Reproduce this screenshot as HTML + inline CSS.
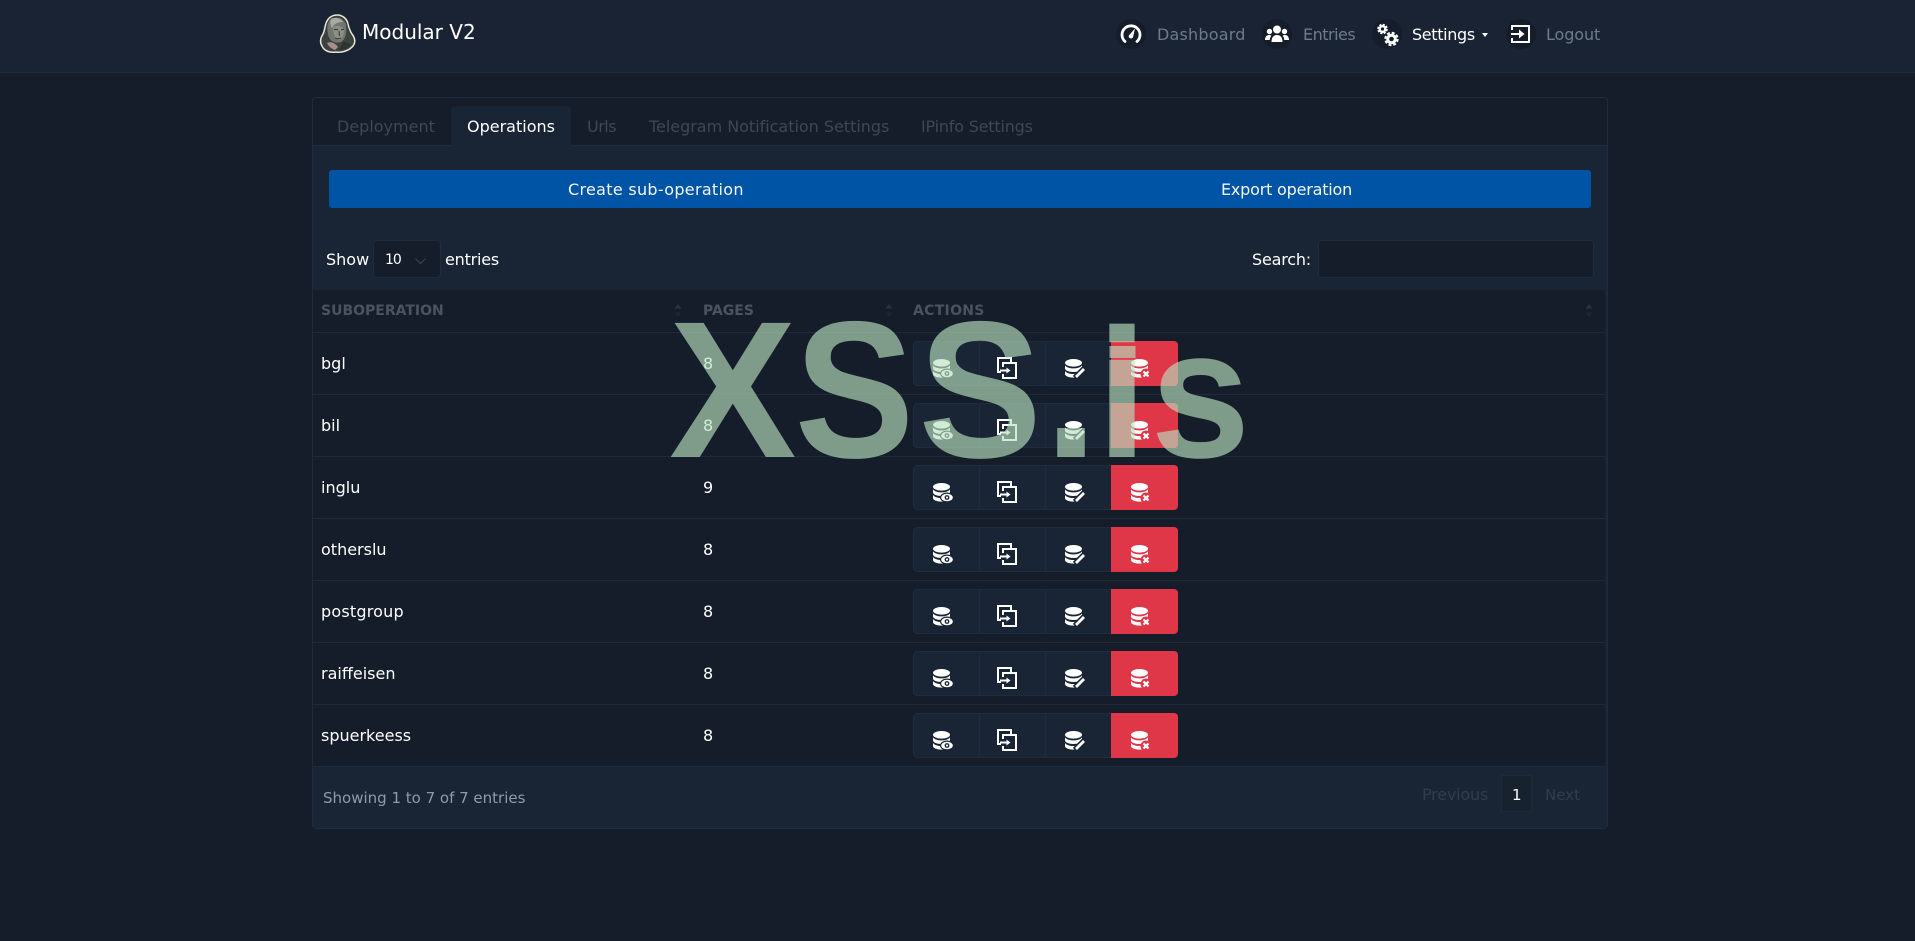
<!DOCTYPE html>
<html lang="en"><head><meta charset="utf-8"><title>Modular V2</title>
<style>
html,body{margin:0;padding:0;width:1915px;height:941px;overflow:hidden;background:#141d29}
*{box-sizing:border-box}
body{position:relative;font-family:"DejaVu Sans","Liberation Sans",sans-serif;font-size:16px;color:#fff}
.a{position:absolute}
.t{position:absolute;white-space:nowrap;line-height:20px;height:20px}
.nav{left:0;top:0;width:1915px;height:73px;background:#192333;border-bottom:1px solid #1d2b3e}
.card{left:312px;top:97px;width:1296px;height:732px;background:#192434;border:1px solid #1e2c3f;border-radius:4px}
.tabs{left:313px;top:98px;width:1294px;height:48px;background:#141d29;border-bottom:1px solid #1e2c3f;border-radius:4px 4px 0 0}
.tab{left:451px;top:106px;width:120px;height:40px;background:#192434;border-radius:4px 4px 0 0}
.m{color:#3e4753}
.blue{left:329px;top:170px;width:1262px;height:38px;background:#0054a6;border-radius:3px}
.inp{background:#141d29;border:1px solid #1e2c3f;border-radius:4px}
.table{left:313px;top:290px;width:1292px;height:476px;background:#141d29}
.line{left:313px;width:1292px;height:1px;background:#1c2a3c}
.h{font-weight:700;font-size:14px;color:#4a535e}
.grp{left:913px;width:265px;height:45px;background:#192434;border:1px solid #1e2c3f;border-radius:4px}
.sep{top:0;width:1px;height:43px;background:#1e2c3f}
.red{left:197px;top:-1px;width:67px;height:45px;background:#df3648;border-radius:0 4px 4px 0}
svg{position:absolute;display:block;overflow:visible}
.c{position:absolute;top:19px;width:30px;height:30px;border-radius:50%;background:#141d29}
.n{color:#6f7b88}
</style></head><body>
<svg width="0" height="0" style="position:absolute">
<defs>
<symbol id="db" viewBox="0 0 20 20" overflow="visible"><ellipse cx="8.500" cy="3.800" rx="8.500" ry="3.800" fill="#fff"/><path fill="#fff" d="M0 6.400c1.500 2 4.900 3 8.500 3s7-1 8.500-3v3c0 2.100-3.800 3.600-8.500 3.600S0 11.500 0 9.400z"/><path fill="#fff" d="M0 12c1.500 2 4.900 3 8.500 3s7-1 8.500-3v3c0 2.100-3.800 3.600-8.500 3.600S0 17.100 0 15z"/></symbol>
<symbol id="v" viewBox="0 0 20 20" overflow="visible"><use href="#db" width="20" height="20"/><ellipse cx="14" cy="14.500" rx="7" ry="5" fill="#192434"/><ellipse cx="14" cy="14.500" rx="5.800" ry="3.800" fill="#fff"/><circle cx="14" cy="14.500" r="2.400" fill="#192434"/><circle cx="14" cy="14.500" r="1.100" fill="#fff"/></symbol>
<symbol id="cp" viewBox="0 0 20 22" overflow="visible"><g fill="none" stroke="#fff" stroke-width="2"><path d="M14 5V1H1v14h3"/><path d="M6 10V6h13v15H6v-4"/><path d="M3 13.500h8"/></g><path fill="#fff" d="M9.500 10.500l4 3-4 3z"/></symbol>
<symbol id="ed" viewBox="0 0 20 20" overflow="visible"><use href="#db" width="20" height="20"/><path d="M10 19L19.500 9.500" stroke="#192434" stroke-width="6"/><path d="M11 18L19 10" stroke="#fff" stroke-width="2.800"/></symbol>
<symbol id="dl" viewBox="0 0 20 20" overflow="visible"><use href="#db" width="20" height="20"/><circle cx="15" cy="15" r="5.500" fill="#df3648"/><path d="M12.500 12.500l5 5m0-5l-5 5" stroke="#fff" stroke-width="2.200" fill="none"/></symbol>
<symbol id="sort" viewBox="0 0 8 14" overflow="visible"><path fill="#2a3441" d="M4 0l3.500 4.500h-7z"/><path fill="#1c2632" d="M4 13l3.500-4.500h-7z"/></symbol>
<symbol id="btns" viewBox="0 0 265 45" overflow="visible">
<use href="#v" x="20" y="18" width="20" height="20"/><use href="#cp" x="84" y="16" width="20" height="22"/><use href="#ed" x="152" y="18" width="20" height="20"/><use href="#dl" x="218" y="18" width="20" height="20"/>
</symbol>
</defs></svg>

<div class="a nav"></div>
<svg style="left:319px;top:14px" width="37" height="39" viewBox="0 0 37 39">
<path d="M18 1C24 1 28 5 29 10C30 14 31 17 33 20C36 24 37 28 34 32C30 37 22 39 17 38C11 39 5 37 3 32C0 27 2 23 4 20C6 16 6 10 8 7C10 3 14 1 18 1Z" fill="#3c433f" stroke="#e9e6d6" stroke-width="1.500"/>
<path d="M12 5C17 2 25 4 27 11C28 18 27 25 22 28C16 30 10 27 9 20C8 14 8 8 12 5Z" fill="#73766f"/>
<path d="M12 5C17 3 22 4 24 8C20 8 15 9 13 14C11 11 11 7 12 5Z" fill="#a9a9a4"/>
<path d="M14 13C18 11 23 12 25 15C25 20 24 25 20 26C17 26 14 22 14 13Z" fill="#8d8e88"/>
<path d="M15 15.500h4M22 15.500h3M20 17l.5 5M16 24c2 1 4 1 6 0" stroke="#3e403d" stroke-width="1.200" fill="none"/>
<path d="M8 29c4-2 8 0 11 4l-3 3c-3-1-6-3-8-7z" fill="#a98d8a"/>
<path d="M24 28c3 0 6 1 8 3-3 3-7 5-12 5z" fill="#2c3330"/>
</svg>
<div class="t" style="left:362px;top:21px;font-size:20px;line-height:22px;height:22px;color:#fff">Modular V2</div>

<div class="c" style="left:1116px"></div>
<svg style="left:1121px;top:24px" width="20" height="20" viewBox="0 0 20 20"><path d="M4 17.500A9 9 0 1 1 16 17.500" fill="none" stroke="#fff" stroke-width="2.800" stroke-linecap="round"/><path d="M7.800 11.500L14 4.500l-2 8.800a2.300 2.300 0 0 1-4.200-1.800z" fill="#fff"/></svg>
<div class="t n" style="left:1157px;top:25px;letter-spacing:.2px">Dashboard</div>

<div class="c" style="left:1262px"></div>
<svg style="left:1265px;top:25px" width="24" height="18" viewBox="0 0 24 18" fill="#fff"><circle cx="12" cy="4.500" r="4"/><circle cx="4.500" cy="6.500" r="2.700"/><circle cx="19.500" cy="6.500" r="2.700"/><path d="M6.500 17c0-4.500 2-7 5.500-7s5.500 2.500 5.500 7z"/><path d="M0 15c0-3 1.500-5 4-5 1 0 1.800.3 2.400.8C5.300 12 4.800 13.500 4.700 15z"/><path d="M24 15c0-3-1.500-5-4-5-1 0-1.800.3-2.400.8 1.100 1.200 1.600 2.700 1.700 4.200z"/></svg>
<div class="t n" style="left:1303px;top:25px;letter-spacing:-.5px">Entries</div>

<div class="c" style="left:1372px"></div>
<svg style="left:1377px;top:24px" width="22" height="22" viewBox="0 0 22 22" fill="none" stroke="#fff"><circle cx="5.500" cy="5" r="2.800" stroke-width="2.400"/><circle cx="5.500" cy="5" r="4.500" stroke-width="1.600" stroke-dasharray="2.200 1.340"/><circle cx="14.500" cy="15" r="3.800" stroke-width="3"/><circle cx="14.500" cy="15" r="6.200" stroke-width="2" stroke-dasharray="3 1.870"/></svg>
<div class="t" style="left:1412px;top:25px;letter-spacing:-.35px;color:#fff">Settings</div>
<div class="a" style="left:1482px;top:33px;width:0;height:0;border-left:3.500px solid transparent;border-right:3.500px solid transparent;border-top:4px solid #fff"></div>

<div class="c" style="left:1506px"></div>
<svg style="left:1511px;top:25px" width="19" height="18" viewBox="0 0 19 18" fill="none" stroke="#fff" stroke-width="2"><path d="M1 5V1h17v16H1v-4"/><path d="M0 9h10"/><path fill="#fff" stroke="none" d="M8 4.500L13.500 9 8 13.500z"/></svg>
<div class="t n" style="left:1546px;top:25px;letter-spacing:-.1px">Logout</div>

<div class="a card"></div>
<div class="a tabs"></div>
<div class="a tab"></div>
<div class="t m" style="left:337px;top:117px">Deployment</div>
<div class="t" style="left:467px;top:117px;color:#fff">Operations</div>
<div class="t m" style="left:587px;top:117px;letter-spacing:-.5px">Urls</div>
<div class="t m" style="left:649px;top:117px;letter-spacing:-.02px">Telegram Notification Settings</div>
<div class="t m" style="left:921px;top:117px;letter-spacing:-.2px">IPinfo Settings</div>

<div class="a blue"></div>
<div class="t" style="left:568px;top:180px;letter-spacing:.3px;color:#f4f7fb">Create sub-operation</div>
<div class="t" style="left:1221px;top:180px;letter-spacing:-.2px;color:#f4f7fb">Export operation</div>

<div class="t" style="left:326px;top:250px">Show</div>
<div class="a inp" style="left:373px;top:240px;width:68px;height:38px"></div>
<div class="t" style="left:385px;top:250px;font-size:14px;letter-spacing:-1px">10</div>
<svg style="left:415px;top:258px" width="11" height="6" viewBox="0 0 11 6"><path d="M.5.500L5.500 5.500 10.500.500" fill="none" stroke="#38424f" stroke-width="1.200"/></svg>
<div class="t" style="left:445px;top:250px;letter-spacing:-.2px">entries</div>
<div class="t" style="left:1252px;top:250px;letter-spacing:-.2px">Search:</div>
<div class="a inp" style="left:1318px;top:240px;width:276px;height:38px"></div>

<div class="a table"></div>
<div class="t h" style="left:321px;top:301px">SUBOPERATION</div>
<div class="t h" style="left:703px;top:301px">PAGES</div>
<div class="t h" style="left:913px;top:301px;letter-spacing:.3px">ACTIONS</div>
<svg style="left:674px;top:304px" width="8" height="14"><use href="#sort" width="8" height="14"/></svg>
<svg style="left:885px;top:304px" width="8" height="14"><use href="#sort" width="8" height="14"/></svg>
<svg style="left:1585px;top:304px" width="8" height="14"><use href="#sort" width="8" height="14"/></svg>

<div class="a line" style="top:332px"></div>
<div class="a line" style="top:394px"></div>
<div class="a line" style="top:456px"></div>
<div class="a line" style="top:518px"></div>
<div class="a line" style="top:580px"></div>
<div class="a line" style="top:642px"></div>
<div class="a line" style="top:704px"></div>
<div class="a line" style="top:766px"></div>

<div class="t" style="left:321px;top:354px">bgl</div><div class="t" style="left:703px;top:354px">8</div>
<div class="a grp" style="top:341px"><div class="a sep" style="left:65px"></div><div class="a sep" style="left:131px"></div><div class="a red"></div><svg style="left:-1px;top:-1px" width="265" height="45"><use href="#btns" width="265" height="45"/></svg></div>
<div class="t" style="left:321px;top:416px">bil</div><div class="t" style="left:703px;top:416px">8</div>
<div class="a grp" style="top:403px"><div class="a sep" style="left:65px"></div><div class="a sep" style="left:131px"></div><div class="a red"></div><svg style="left:-1px;top:-1px" width="265" height="45"><use href="#btns" width="265" height="45"/></svg></div>
<div class="t" style="left:321px;top:478px">inglu</div><div class="t" style="left:703px;top:478px">9</div>
<div class="a grp" style="top:465px"><div class="a sep" style="left:65px"></div><div class="a sep" style="left:131px"></div><div class="a red"></div><svg style="left:-1px;top:-1px" width="265" height="45"><use href="#btns" width="265" height="45"/></svg></div>
<div class="t" style="left:321px;top:540px">otherslu</div><div class="t" style="left:703px;top:540px">8</div>
<div class="a grp" style="top:527px"><div class="a sep" style="left:65px"></div><div class="a sep" style="left:131px"></div><div class="a red"></div><svg style="left:-1px;top:-1px" width="265" height="45"><use href="#btns" width="265" height="45"/></svg></div>
<div class="t" style="left:321px;top:602px;letter-spacing:.2px">postgroup</div><div class="t" style="left:703px;top:602px">8</div>
<div class="a grp" style="top:589px"><div class="a sep" style="left:65px"></div><div class="a sep" style="left:131px"></div><div class="a red"></div><svg style="left:-1px;top:-1px" width="265" height="45"><use href="#btns" width="265" height="45"/></svg></div>
<div class="t" style="left:321px;top:664px">raiffeisen</div><div class="t" style="left:703px;top:664px">8</div>
<div class="a grp" style="top:651px"><div class="a sep" style="left:65px"></div><div class="a sep" style="left:131px"></div><div class="a red"></div><svg style="left:-1px;top:-1px" width="265" height="45"><use href="#btns" width="265" height="45"/></svg></div>
<div class="t" style="left:321px;top:726px">spuerkeess</div><div class="t" style="left:703px;top:726px">8</div>
<div class="a grp" style="top:713px"><div class="a sep" style="left:65px"></div><div class="a sep" style="left:131px"></div><div class="a red"></div><svg style="left:-1px;top:-1px" width="265" height="45"><use href="#btns" width="265" height="45"/></svg></div>

<div class="t" style="left:323px;top:788px;font-size:15px;color:#8d9bab">Showing 1 to 7 of 7 entries</div>
<div class="t" style="left:1422px;top:785px;letter-spacing:-.2px;color:#333d4a">Previous</div>
<div class="a" style="left:1501px;top:775px;width:31px;height:37px;background:#18222f;border:1px solid #1f2a38"></div>
<div class="t" style="left:1512px;top:785px;font-size:15px;color:#fff">1</div>
<div class="t" style="left:1545px;top:785px;font-size:15px;color:#333d4a">Next</div>

<svg style="left:0;top:0;pointer-events:none" width="1915" height="941">
<g font-family="Liberation Sans, sans-serif" font-weight="700" font-size="195" fill="#b9e1be" fill-opacity=".65">
<text transform="translate(669,457) scale(.98,1)">X</text>
<text transform="translate(794.600,457) scale(.92,1)">S</text>
<text transform="translate(918.400,457) scale(.95,1)">S</text>
<text transform="translate(1044,457)">.</text>
<text transform="translate(1096.500,457)" font-size="184">i</text>
<rect x="1109.500" y="346" width="26" height="12"/>
<text transform="translate(1150.500,457) scale(.92,.94)">s</text>
</g></svg>
</body></html>
